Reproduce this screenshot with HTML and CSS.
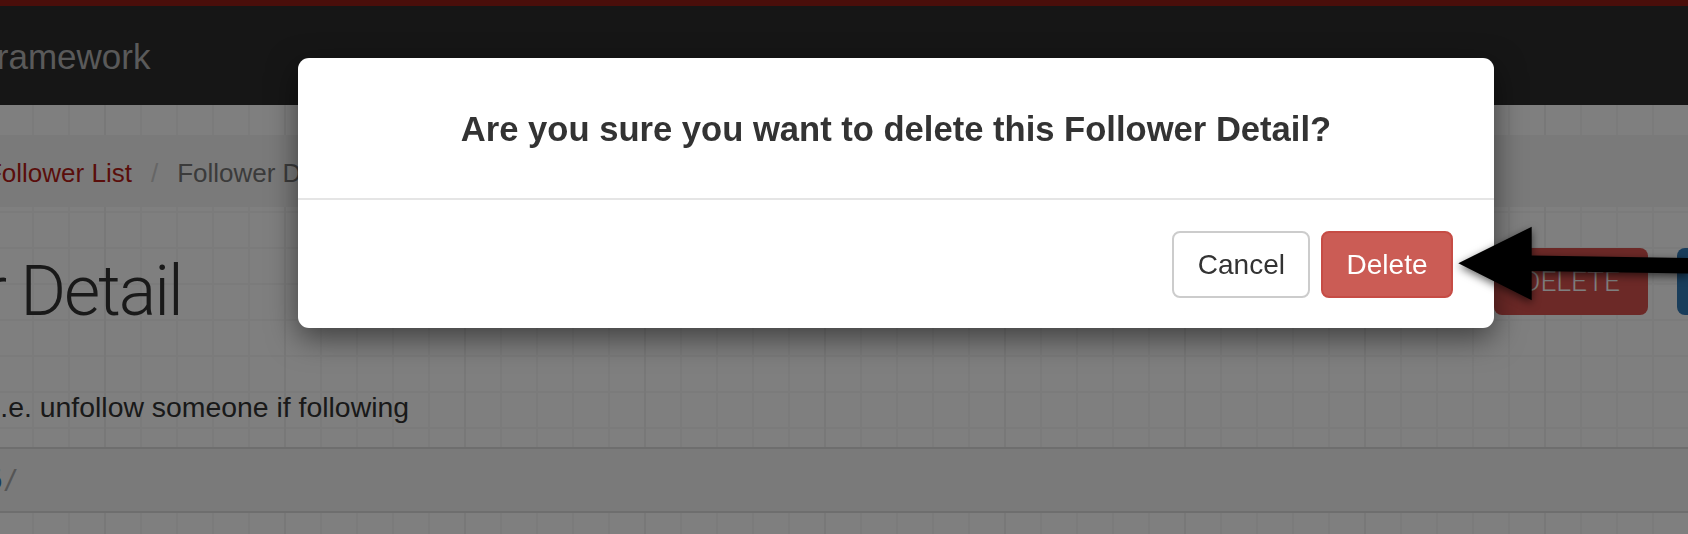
FILE: index.html
```html
<!DOCTYPE html>
<html lang="en">
<head>
<meta charset="utf-8">
<title>Follower Detail</title>
<link rel="stylesheet" href="styles.css">
</head>
<body>
<div class="topbar"></div>
<nav class="navbar"><span class="brand">Django REST framework</span></nav>
<main class="page">
  <ul class="breadcrumb">
    <li><a href="#">Api Root</a></li>
    <li><a href="#">Follower List</a></li>
    <li class="active">Follower Detail</li>
  </ul>
  <div class="page-header">
    <h1>Follower Detail</h1>
    <div class="actions">
      <button class="pbtn pbtn-danger">DELETE</button>
      <button class="pbtn pbtn-primary">OPTIONS</button>
    </div>
  </div>
  <p class="desc">i.e. unfollow someone if following</p>
  <pre class="request"><b>DELETE</b> /api/followers/<span class="lit">5</span><span class="pun">/</span></pre>
</main>
<div class="backdrop"></div>
<div class="modal">
  <div class="modal-header">
    <h4 class="modal-title">Are you sure you want to delete this Follower Detail?</h4>
  </div>
  <div class="modal-footer">
    <button class="btn btn-default">Cancel</button>
    <button class="btn btn-danger">Delete</button>
  </div>
</div>
<svg class="arrow" width="248" height="120" viewBox="0 0 248 120">
  <polygon points="18.3,63.3 91.7,26.7 91.7,55.5 248,58 248,73.5 91.7,71 91.7,100.3" fill="#000"/>
</svg>
</body>
</html>
```
FILE: styles.css
```css
html, body {
  margin: 0;
  height: 100%;
}
body {
  overflow: hidden;
  font-family: "Liberation Sans", Arial, sans-serif;
  background-color: #fff;
  background-image:
    linear-gradient(to right, #f0f0f0 2px, transparent 2px),
    linear-gradient(to right, #f6f6f6 2px, transparent 2px),
    linear-gradient(to bottom, #f6f6f6 2px, transparent 2px);
  background-size: 180px 100%, 36px 100%, 100% 36px;
  background-position: 104px 0, 32px 0, 0 31px;
}
.topbar {
  height: 6px;
  background: #941c14;
}
.navbar {
  height: 99px;
  background: #2c2c2c;
  display: flex;
  align-items: flex-start;
}
.brand {
  margin-left: -236px;
  padding-top: 2px;
  line-height: 97px;
  font-size: 35px;
  color: #b4b4b4;
  white-space: nowrap;
}
.breadcrumb {
  list-style: none;
  margin: 30px 0 0;
  padding: 4px 0 0;
  height: 72px;
  box-sizing: border-box;
  background: #f5f5f5;
  display: flex;
  font-size: 26px;
  line-height: 68px;
  white-space: nowrap;
}
.breadcrumb li:first-child {
  margin-left: -159px;
}
.breadcrumb li + li::before {
  content: "/";
  color: #ccc;
  padding: 0 19px;
}
.breadcrumb a {
  color: #b41c16;
  text-decoration: none;
}
.breadcrumb .active {
  color: #777;
}
.page-header {
  display: flex;
  align-items: flex-start;
  margin: 41px -143px 0 0;
}
.page-header h1 {
  margin: 0 0 0 -240px;
  font-family: Roboto, "Liberation Sans", sans-serif;
  font-weight: 300;
  font-size: 70px;
  line-height: 86px;
  letter-spacing: -2px;
  color: #333;
  white-space: nowrap;
}
.actions {
  margin-left: auto;
  display: flex;
  gap: 29px;
}
.pbtn {
  width: 154px;
  height: 67px;
  box-sizing: border-box;
  border: 0;
  border-radius: 8px;
  padding: 0;
  font-family: Roboto, "Liberation Sans", sans-serif;
  font-weight: 300;
  font-size: 28px;
  color: #fff;
}
.pbtn-danger {
  background: #d9534f;
}
.pbtn-primary {
  background: #337ab7;
}
.desc {
  margin: 53px 0 0 -6px;
  font-size: 28.4px;
  line-height: 40px;
  color: #333;
  white-space: nowrap;
}
.request {
  margin: 20px 0 0;
  height: 66px;
  box-sizing: border-box;
  border-top: 2px solid #ddd;
  border-bottom: 2px solid #ddd;
  background: #f5f5f5;
  font-family: "DejaVu Sans Mono", monospace;
  font-size: 26px;
  line-height: 62px;
  color: #333;
  text-indent: -357px;
  white-space: pre;
}
.request b {
  font-weight: 700;
}
.lit {
  color: #337ab7;
}
.pun {
  color: #aaa;
}
.backdrop {
  position: fixed;
  inset: 0;
  background: rgba(0, 0, 0, 0.5);
}
.modal {
  position: absolute;
  left: 298px;
  top: 58px;
  width: 1196px;
  background: #fff;
  border-radius: 11px;
  box-shadow: 0 10px 30px rgba(0, 0, 0, 0.5);
}
.modal-header {
  height: 142px;
  box-sizing: border-box;
  padding-top: 3px;
  border-bottom: 2px solid #e5e5e5;
  display: flex;
  align-items: center;
  justify-content: center;
}
.modal-title {
  margin: 0;
  font-size: 34.6px;
  font-weight: 700;
  color: #333;
  white-space: nowrap;
}
.modal-footer {
  height: 128px;
  box-sizing: border-box;
  padding: 0 41px 0 0;
  display: flex;
  justify-content: flex-end;
  align-items: center;
  gap: 10.6px;
}
.btn {
  height: 67px;
  box-sizing: border-box;
  padding: 1px 23.5px 0;
  border: 2px solid;
  border-radius: 8px;
  font-family: "Liberation Sans", Arial, sans-serif;
  font-size: 28px;
  line-height: 62px;
}
.btn-default {
  background: #fff;
  border-color: #ccc;
  color: #333;
}
.btn-danger {
  background: #cb5c55;
  border-color: #c64c45;
  color: #fff;
}
.arrow {
  position: absolute;
  left: 1440px;
  top: 200px;
  overflow: visible;
  filter: drop-shadow(0 3px 4px rgba(0, 0, 0, 0.6));
}
```
